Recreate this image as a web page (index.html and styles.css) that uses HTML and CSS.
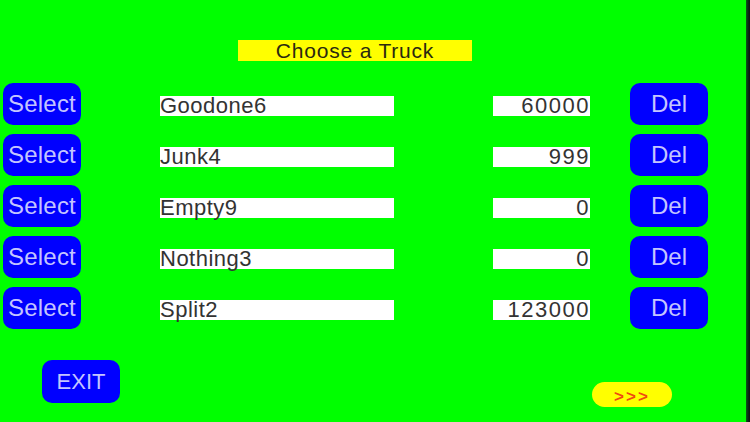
FILE: index.html
```html
<!DOCTYPE html>
<html>
<head>
<meta charset="utf-8">
<link rel="stylesheet" href="styles.css">
</head>
<body>
<div class="screen">
  <main class="content">
    <div class="title">Choose a Truck</div>
    <div class="rows">
      <div class="row">
        <div class="btn select">Select</div>
        <div class="field name">Goodone6</div>
        <div class="field num">60000</div>
        <div class="btn del">Del</div>
      </div>
      <div class="row">
        <div class="btn select">Select</div>
        <div class="field name">Junk4</div>
        <div class="field num">999</div>
        <div class="btn del">Del</div>
      </div>
      <div class="row">
        <div class="btn select">Select</div>
        <div class="field name">Empty9</div>
        <div class="field num">0</div>
        <div class="btn del">Del</div>
      </div>
      <div class="row">
        <div class="btn select">Select</div>
        <div class="field name">Nothing3</div>
        <div class="field num">0</div>
        <div class="btn del">Del</div>
      </div>
      <div class="row">
        <div class="btn select">Select</div>
        <div class="field name">Split2</div>
        <div class="field num">123000</div>
        <div class="btn del">Del</div>
      </div>
    </div>
    <div class="bottom">
      <div class="btn exit">EXIT</div>
      <div class="next">&gt;&gt;&gt;</div>
    </div>
  </main>
  <div class="edge"></div>
</div>
</body>
</html>
```

FILE: styles.css
```css
html, body {
  margin: 0;
  padding: 0;
  background: #00ff00;
}

body {
  width: 750px;
  height: 422px;
  overflow: hidden;
  font-family: "Liberation Sans", Arial, sans-serif;
}

.screen {
  display: flex;
  width: 750px;
  height: 422px;
}

.content {
  flex: 1;
  display: flex;
  flex-direction: column;
}

.edge {
  width: 4px;
  background: linear-gradient(to right, #0a5a14, #0c2a18 50%, #101010);
}

.title {
  margin: 40px 0 0 238px;
  width: 234px;
  height: 21px;
  background: #ffff00;
  color: #2a2a10;
  font-size: 21px;
  letter-spacing: 0.8px;
  line-height: 21px;
  text-align: center;
}

.rows {
  margin-top: 22px;
  display: flex;
  flex-direction: column;
  gap: 9px;
  padding-left: 3px;
}

.row {
  display: flex;
  align-items: flex-start;
  height: 42px;
}

.btn {
  background: #0000ff;
  color: #c4c4ff;
  border-radius: 10px;
  display: flex;
  align-items: center;
  justify-content: center;
  box-sizing: border-box;
}

.select {
  width: 78px;
  height: 42px;
  font-size: 24px;
  letter-spacing: 0.2px;
}

.del {
  width: 78px;
  height: 42px;
  margin-left: 40px;
  font-size: 24px;
}

.field {
  background: #ffffff;
  color: #333333;
  height: 20px;
  line-height: 20px;
  margin-top: 13px;
  font-size: 22px;
  white-space: nowrap;
}

.name {
  width: 234px;
  margin-left: 79px;
  letter-spacing: 0.5px;
}

.num {
  width: 97px;
  margin-left: 99px;
  text-align: right;
  letter-spacing: 1.5px;
}

.bottom {
  display: flex;
  align-items: flex-start;
  margin-top: 31px;
  padding-left: 42px;
}

.exit {
  width: 78px;
  height: 43px;
  font-size: 22px;
}

.next {
  margin: 22px 0 0 472px;
  width: 80px;
  height: 25px;
  border-radius: 13px;
  background: #ffff00;
  color: #f04a10;
  font-size: 17px;
  font-weight: bold;
  letter-spacing: 2px;
  display: flex;
  align-items: center;
  justify-content: center;
  line-height: 1;
  padding-top: 4px;
  box-sizing: border-box;
}
```
